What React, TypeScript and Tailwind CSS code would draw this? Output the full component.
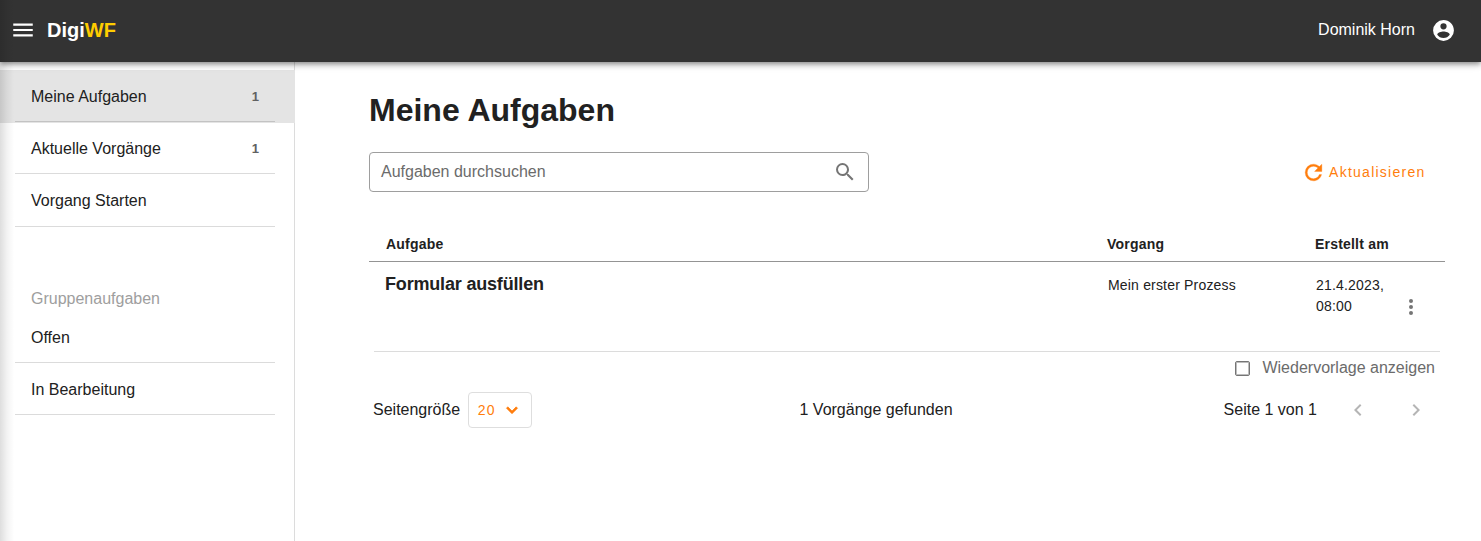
import React from 'react';

const paths = {
  menu: 'M3,6H21V8H3V6M3,11H21V13H3V11M3,16H21V18H3V16Z',
  account:
    'M12,19.2C9.5,19.2 7.29,17.92 6,16C6.03,14 10,12.9 12,12.9C14,12.9 17.97,14 18,16C16.71,17.92 14.5,19.2 12,19.2M12,5A3,3 0 0,1 15,8A3,3 0 0,1 12,11A3,3 0 0,1 9,8A3,3 0 0,1 12,5M12,2A10,10 0 0,0 2,12A10,10 0 0,0 12,22A10,10 0 0,0 22,12C22,6.47 17.5,2 12,2Z',
  magnify:
    'M9.5,3A6.5,6.5 0 0,1 16,9.5C16,11.11 15.41,12.59 14.44,13.73L14.71,14H15.5L20.5,19L19,20.5L14,15.5V14.71L13.73,14.44C12.59,15.41 11.11,16 9.5,16A6.5,6.5 0 0,1 3,9.5A6.5,6.5 0 0,1 9.5,3M9.5,5C7,5 5,7 5,9.5C5,12 7,14 9.5,14C12,14 14,12 14,9.5C14,7 12,5 9.5,5Z',
  refresh:
    'M17.65,6.35C16.2,4.9 14.21,4 12,4A8,8 0 0,0 4,12A8,8 0 0,0 12,20C15.73,20 18.84,17.45 19.73,14H17.65C16.83,16.33 14.61,18 12,18A6,6 0 0,1 6,12A6,6 0 0,1 12,6C13.66,6 15.14,6.69 16.22,7.78L13,11H20V4L17.65,6.35Z',
  dots: 'M12,16A2,2 0 0,1 14,18A2,2 0 0,1 12,20A2,2 0 0,1 10,18A2,2 0 0,1 12,16M12,10A2,2 0 0,1 14,12A2,2 0 0,1 12,14A2,2 0 0,1 10,12A2,2 0 0,1 12,10M12,4A2,2 0 0,1 14,6A2,2 0 0,1 12,8A2,2 0 0,1 10,6A2,2 0 0,1 12,4Z',
  down: 'M7.41,8.58L12,13.17L16.59,8.58L18,10L12,16L6,10L7.41,8.58Z',
  left: 'M15.41,16.58L10.83,12L15.41,7.41L14,6L8,12L14,18L15.41,16.58Z',
  right: 'M8.59,16.58L13.17,12L8.59,7.41L10,6L16,12L10,18L8.59,16.58Z',
};

function Icon({ name, className }: { name: keyof typeof paths; className: string }) {
  return (
    <svg viewBox="0 0 24 24" fill="currentColor" className={`shrink-0 ${className}`}>
      <path d={paths[name]} />
    </svg>
  );
}

function NavItem({ label, count, className = 'h-[52px] pr-[19px]' }: { label: string; count?: number; className?: string }) {
  return (
    <a className={`block pl-[15px] ${className}`}>
      <span className="flex h-full items-start justify-between border-b border-black/[0.14] px-4 pt-[15px]">
        <span>{label}</span>
        {count !== undefined && <span className="text-[13px] font-bold text-[#616161]">{count}</span>}
      </span>
    </a>
  );
}

export default function App() {
  return (
    <div className="relative flex h-[541px] flex-col overflow-hidden bg-white font-['Liberation_Sans',Arial,sans-serif] text-base leading-6 text-[#212121]">
      <header className="relative z-10 flex h-[62px] shrink-0 items-center bg-[#333333] pb-[2px] pl-[10px] pr-[25.5px] text-white shadow-[0_2px_4px_-1px_rgba(0,0,0,0.3),0_4px_5px_rgba(0,0,0,0.16),0_1px_10px_rgba(0,0,0,0.12)]">
        <Icon name="menu" className="size-[26px]" />
        <h2 className="ml-[11px] text-[20px] font-bold">
          Digi<span className="text-[#ffcc00]">WF</span>
        </h2>
        <span className="ml-auto mr-[15.5px]">Dominik Horn</span>
        <Icon name="account" className="size-[25px]" />
      </header>

      <div className="flex flex-1">
        <nav className="w-[295px] shrink-0 border-r border-[#dcdcdc] pt-2">
          <div className="-mr-px h-[53px] bg-[#e4e4e4]">
            <NavItem label="Meine Aufgaben" count={1} className="h-[52px] pr-5" />
          </div>
          <div className="-mt-px">
            <NavItem label="Aktuelle Vorgänge" count={1} />
            <NavItem label="Vorgang Starten" className="h-[53px] pr-[19px]" />
          </div>
          <div className="mt-[60px] h-6 pl-[31px] text-[#9e9e9e]">Gruppenaufgaben</div>
          <NavItem label="Offen" />
          <NavItem label="In Bearbeitung" />
        </nav>

        <main className="flex-1 pl-[74px] pr-9 pt-6">
          <h1 className="text-[32px] font-bold leading-[48px]">Meine Aufgaben</h1>
          <div className="mt-[18px] flex h-10 items-center justify-between">
            <div className="flex h-10 w-[500px] items-center justify-between rounded-[4px] border border-[#9e9e9e] pl-[11px] pr-[11px] text-[#6b6b6b]">
              <span>Aufgaben durchsuchen</span>
              <Icon name="magnify" className="size-6 text-[#757575]" />
            </div>
            <button className="mr-[19.5px] flex items-center gap-[3px] text-[14px] tracking-[1.25px] text-[#ff7d0c]">
              <Icon name="refresh" className="-ml-px size-[25px] stroke-current stroke-[0.3]" />
              Aktualisieren
            </button>
          </div>

          <div className="mt-[34px] grid h-9 grid-cols-[721px_208px_1fr] items-center border-b border-[#949494] pl-[17px] text-[14px] font-bold tracking-[0.2px]">
            <span>Aufgabe</span>
            <span>Vorgang</span>
            <span>Erstellt am</span>
          </div>
          <div className="mx-[5px] grid h-[90px] grid-cols-[722px_208px_83px_1fr] border-b border-[#dcdcdc] pl-3 pt-[13px] text-[14px] leading-[21px] tracking-[0.18px]">
            <h3 className="-ml-px text-[18px] font-bold tracking-[-0.18px] leading-[18px]">Formular ausfüllen</h3>
            <span>Mein erster Prozess</span>
            <span>21.4.2023, 08:00</span>
            <Icon name="dots" className="mt-5 size-6 text-[#757575]" />
          </div>

          <div className="flex h-8 items-center justify-end gap-3 pr-[10px] text-[#6b6b6b]">
            <span className="size-[15px] rounded-[2px] border border-[#757575] shadow-[inset_0_0_0_1px_#bdbdbd]" />
            <span>Wiedervorlage anzeigen</span>
          </div>

          <div className="mt-2 grid h-9 grid-cols-[426.5px_1fr_auto] items-center pl-1 pr-[17px]">
            <div className="flex items-center gap-2">
              <span>Seitengröße</span>
              <button className="flex h-9 w-16 items-center justify-between rounded-[4px] border border-[#dedede] pl-[8.5px] pr-2 text-[14px] tracking-[1.25px] text-[#ff7d0c]">
                20
                <Icon name="down" className="size-[22px] stroke-current stroke-[0.8]" />
              </button>
            </div>
            <span>1 Vorgänge gefunden</span>
            <div className="flex items-center">
              <span>Seite 1 von 1</span>
              <Icon name="left" className="ml-[29px] size-6 text-[#b5b5b5]" />
              <Icon name="right" className="ml-[34px] size-6 text-[#b5b5b5]" />
            </div>
          </div>
        </main>
      </div>

      <div className="pointer-events-none absolute inset-y-0 left-0 z-20 w-[14px] bg-linear-to-r from-black/[0.13] via-black/[0.05] to-transparent" />
    </div>
  );
}
